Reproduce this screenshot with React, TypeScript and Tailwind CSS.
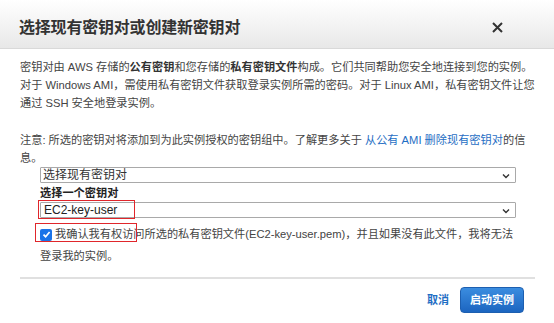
import React from "react";

const Chevron = () => (
  <svg width="8" height="6" viewBox="0 0 8 6" className="absolute right-[5px] top-[5px]">
    <path d="M1 1.5 L4 4.5 L7 1.5" fill="none" stroke="#333" strokeWidth="1.4" />
  </svg>
);

export default function App() {
  return (
    <div className="w-[554px] h-[323px] bg-white relative overflow-hidden font-['Liberation_Sans','Noto_Sans_CJK_SC',sans-serif] text-[#444]">
      <div className="h-[49px] flex items-center justify-between pl-[19px] pr-[51px] pt-[7px] border-b border-[#d9d9d9] bg-gradient-to-b from-white to-[#e8e8e8]">
        <div className="text-[16px] font-bold text-[#333] tracking-[-0.2px]">选择现有密钥对或创建新密钥对</div>
        <svg width="11" height="11" viewBox="0 0 11 11">
          <path d="M1 1 L10 10 M10 1 L1 10" stroke="#333" strokeWidth="2" />
        </svg>
      </div>
      <div className="px-[20px] pt-[9px] text-[11.2px] leading-[18px]">
        <p className="whitespace-nowrap">
          密钥对由 AWS 存储的<b className="text-[#333]">公有密钥</b>和您存储的<b className="text-[#333]">私有密钥文件</b>构成。它们共同帮助您安全地连接到您的实例。
          <br />
          对于 Windows AMI，需使用私有密钥文件获取登录实例所需的密码。对于 Linux AMI，私有密钥文件让您
          <br />
          通过 SSH 安全地登录实例。
        </p>
        <p className="whitespace-nowrap mt-[19px]">
          注意: 所选的密钥对将添加到为此实例授权的密钥组中。了解更多关于 <span className="text-[#1f6ec4]">从公有 AMI 删除现有密钥对</span>的信
          <br />
          息。
        </p>
        <div className="pl-[20px] pr-[18px]">
          <div className="relative h-[16px] border border-[#a9a9a9] rounded-[1px] pl-[2px] text-[12px] leading-[14px] text-[#333]">
            选择现有密钥对
            <Chevron />
          </div>
          <div className="mt-[2px] text-[11.2px] font-bold text-[#222] leading-[17px]">选择一个密钥对</div>
          <div className="relative h-[16px] border border-[#a9a9a9] rounded-[1px] pl-[3px] text-[12px] leading-[14px] text-[#222]">
            EC2-key-user
            <Chevron />
            <div className="absolute left-[-3px] top-[-3px] w-[97px] h-[19px] border-[1.5px] border-[#e0262b]" />
          </div>
          <div className="relative mt-[6px] text-[11.2px] leading-[21px] whitespace-nowrap">
            <span className="inline-flex items-center gap-[3px]">
              <span className="inline-flex items-center justify-center w-[12px] h-[12px] rounded-[2px] bg-[#1a73e8]">
                <svg width="9" height="9" viewBox="0 0 9 9">
                  <path d="M1.5 4.6 L3.6 6.7 L7.6 2" fill="none" stroke="white" strokeWidth="1.7" />
                </svg>
              </span>
              <span>我确认我有权访问所选的私有密钥文件(EC2-key-user.pem)，并且如果没有此文件，我将无法</span>
            </span>
            <br />
            登录我的实例。
            <div className="absolute left-[-5px] top-[-1px] w-[102px] h-[19px] border-[1.5px] border-[#e0262b]" />
          </div>
        </div>
        <div className="mt-[10px] h-[2px] bg-[#e0e0e0] mr-[-1px]" />
        <div className="flex items-center justify-end gap-[11px] mt-[8px] pr-[10px]">
          <span className="text-[11px] font-bold text-[#1f6ec4]">取消</span>
          <button className="h-[26px] px-[9px] rounded-[4px] border border-[#1d5fb0] bg-gradient-to-b from-[#3b8de0] to-[#1c65c0] text-white text-[11px] font-bold">
            启动实例
          </button>
        </div>
      </div>
    </div>
  );
}
